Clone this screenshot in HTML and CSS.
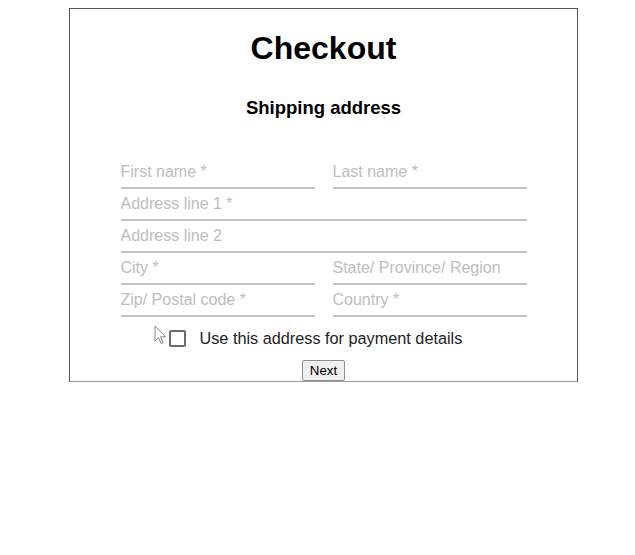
FILE: index.html
```html
<!DOCTYPE html>
<html>
<head>
<meta charset="utf-8">
<link rel="stylesheet" href="styles.css">
</head>
<body>
<div class="card">
  <h1 class="title">Checkout</h1>
  <h3 class="subtitle">Shipping address</h3>
  <form class="form">
    <div class="row two">
      <input class="field" placeholder="First name *">
      <input class="field" placeholder="Last name *">
    </div>
    <div class="row">
      <input class="field" placeholder="Address line 1 *">
    </div>
    <div class="row">
      <input class="field" placeholder="Address line 2">
    </div>
    <div class="row two">
      <input class="field" placeholder="City *">
      <input class="field" placeholder="State/ Province/ Region">
    </div>
    <div class="row two">
      <input class="field" placeholder="Zip/ Postal code *">
      <input class="field" placeholder="Country *">
    </div>
    <label class="check">
      <svg class="cursor" width="13" height="20" viewBox="0 0 13 20"><path d="M1 1 L1 16 L4.5 12.5 L7 18.5 L9 17.6 L6.6 11.8 L11.5 11.8 Z" fill="#fff" stroke="#888" stroke-width="1" stroke-linejoin="round"/></svg>
      <input type="checkbox" class="box">
      <span>Use this address for payment details</span>
    </label>
    <div class="actions">
      <button type="button" class="next">Next</button>
    </div>
  </form>
</div>
</body>
</html>
```
FILE: styles.css
```css
html, body {
  margin: 0;
  padding: 0;
  background: #fff;
}
body {
  padding: 8px 0 0 69px;
  font-family: "Liberation Sans", Arial, sans-serif;
}
.card {
  width: 507px;
  border: 1px solid #555;
  border-bottom-color: #999;
  box-sizing: content-box;
  display: flex;
  flex-direction: column;
  align-items: center;
}
.title {
  margin: 21px 0 0;
  font-size: 32px;
  line-height: 37px;
  font-weight: bold;
  color: #000;
}
.subtitle {
  margin: 30px 0 0;
  font-size: 18.5px;
  line-height: 22px;
  font-weight: bold;
  color: #000;
}
.form {
  width: 406px;
  margin-top: 38px;
  display: flex;
  flex-direction: column;
}
.row {
  display: flex;
  gap: 18px;
}
.field {
  flex: 1;
  min-width: 0;
  height: 32px;
  box-sizing: border-box;
  border: none;
  border-bottom: 2px solid #c4c4c4;
  padding: 0;
  margin: 0;
  font-family: "Liberation Sans", Arial, sans-serif;
  font-size: 16px;
  color: #333;
  background: transparent;
  outline: none;
}
.field::placeholder {
  color: #bdbdbd;
}
.check {
  position: relative;
  display: flex;
  align-items: center;
  align-self: flex-start;
  margin: 12px 0 0 48px;
  font-size: 16.25px;
  color: #222;
}
.box {
  appearance: none;
  -webkit-appearance: none;
  width: 17px;
  height: 17px;
  margin: 0 14px 0 0;
  border: 2px solid #6b6b6b;
  border-radius: 2px;
  box-sizing: border-box;
  background: #fff;
}
.cursor {
  position: absolute;
  left: -15px;
  top: -4px;
}
.actions {
  display: flex;
  justify-content: center;
  margin-top: 12px;
}
.next {
  font-family: "Liberation Sans", Arial, sans-serif;
  font-size: 13.33px;
  padding: 2px 7px;
  height: 21px;
  border: 1px solid #8f8f8f;
  border-radius: 2px;
  background: #efefef;
  color: #000;
  margin: 0;
}
```
